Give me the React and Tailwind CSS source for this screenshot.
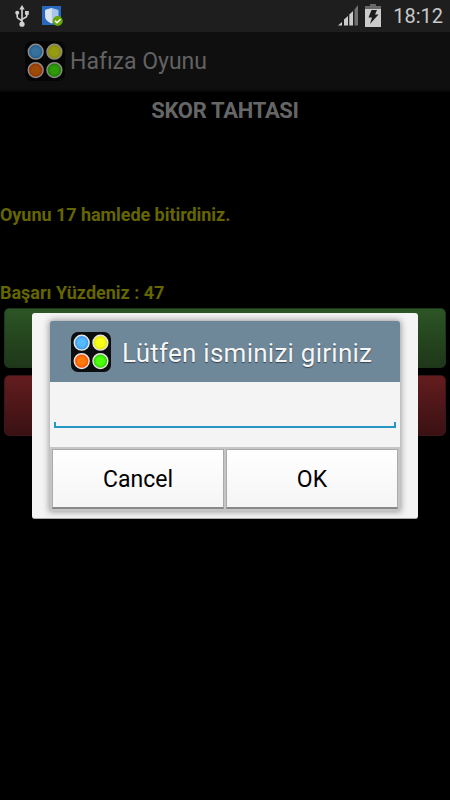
function GameIcon({ dim = false }) {
  const discs = [
    [10.7, 10.7, 'blue', '#55baff', '#318df0'],
    [29.4, 10.7, 'yellow', '#f7ff19', '#e4df00'],
    [10.7, 29.1, 'orange', '#ff7a0b', '#ff4200'],
    [29.4, 29.1, 'green', '#4bff0a', '#24bd00'],
  ];
  return (
    <svg viewBox="0 0 40 40" className="size-10 shrink-0">
      <rect width="40" height="40" rx="7" fill={dim ? '#050505' : '#0b0d0f'} />
      {discs.map(([cx, cy, name, inner, outer]) => (
        <g key={name} opacity={dim ? 0.6 : 1}>
          <radialGradient id={`disc-${name}-${dim}`}>
            <stop offset="0.5" stopColor={inner} />
            <stop offset="1" stopColor={outer} />
          </radialGradient>
          <circle cx={cx} cy={cy} r="7.4" fill={`url(#disc-${name}-${dim})`} stroke="#e4e4e0" strokeWidth="1.5" />
        </g>
      ))}
    </svg>
  );
}

function UsbIcon() {
  return (
    <svg viewBox="0 0 14 22" className="h-[22px] w-3.5" fill="none" stroke="#d2d2d2" strokeWidth="1.6">
      <path d="M7 3v16M2.2 8v4c0 2 4.8 2.5 4.8 4.5M11.8 8v3c0 2-4.8 2-4.8 4" />
      <path d="M7 0l2.7 4.5H4.3z" fill="#d2d2d2" stroke="none" />
      <circle cx="2.2" cy="7.8" r="2" fill="#d2d2d2" stroke="none" />
      <path d="M10 6h3.8v3.8H10z" fill="#d2d2d2" stroke="none" />
      <circle cx="7" cy="19.2" r="2.6" fill="#d2d2d2" stroke="none" />
    </svg>
  );
}

function ShieldIcon() {
  return (
    <svg viewBox="0 0 21 21" className="size-[21px]">
      <path d="M0 1h19v19H0z" fill="#2869bd" />
      <path d="M9.8 3l6.7 2v6c0 4-3.5 6-6.7 7.5C6.5 17 3.2 15 3.2 11V5z" fill="#a8c5ea" />
      <path d="M9.8 3v15.5C6.5 17 3.2 15 3.2 11V5z" fill="#dce5ef" />
      <circle cx="15.7" cy="16" r="5" fill="#67a607" />
      <path d="M13 15.8l2 2 3.5-3.6" fill="none" stroke="#fff" strokeWidth="1.4" />
    </svg>
  );
}

function SignalIcon() {
  return (
    <svg viewBox="0 0 21 21" className="h-[21px] w-[21px]">
      <path d="M0 20.5L4 17v3.5zM6 20.5v-6l4-3.5v9.5zM11.3 20.5V9.5L15 6v14.5z" fill="#cbcbcb" />
      <path d="M16.5 20.5v-16L20 0v20.5z" fill="#707070" />
    </svg>
  );
}

function BatteryIcon() {
  return (
    <svg viewBox="0 0 16 23" className="h-[23px] w-4">
      <path d="M5 0h6v2h5v4H0V2h5z" fill="#686868" />
      <path d="M0 5h16v18H0z" fill="#cbcbcb" />
      <path d="M6.5 6h5.5l-2 4.5h3.5L5 20l2-6.5H3.5z" fill="#1c1c1c" />
    </svg>
  );
}

function StatusBar() {
  return (
    <div className="flex h-8 items-start bg-[#1e1e1e] text-[#c9c9c9]">
      <div className="flex gap-[13px] pl-[15px] pt-[5px]">
        <UsbIcon />
        <ShieldIcon />
      </div>
      <div className="ml-auto flex items-start pr-[7px]">
        <div className="pt-[5px]"><SignalIcon /></div>
        <div className="ml-[6px] pt-[4px]"><BatteryIcon /></div>
        <span className="ml-[12px] w-[50px] whitespace-nowrap pt-[4px] text-right text-[20px] leading-6">18:12</span>
      </div>
    </div>
  );
}

function DialogButton({ children }) {
  return (
    <button className="h-[60px] border border-b-2 border-[#aaa] border-b-[#888] bg-linear-to-b from-white to-[#f5f5f5] pt-[3px] font-normal">
      {children}
    </button>
  );
}

function NameDialog() {
  return (
    <div className="absolute left-8 top-[313px] h-[206px] w-[386px] rounded-[3px] border-b border-[#aaa] bg-[#f4f4f4] px-[18px] pt-2">
      <div className="h-[190px] rounded-t-[3px] bg-[#c5c5c5] shadow-[0_0_6px_1px_#999]">
        <div className="flex h-[61px] items-center rounded-t-[3px] bg-[#6e8799] pl-[21px]">
          <GameIcon />
          <h2 className="ml-[11px] whitespace-nowrap pt-[3px] text-[26px] tracking-[0.25px] text-[#f6f6f6] [text-shadow:0_1px_1px_#354550]">Lütfen isminizi giriniz</h2>
        </div>
        <div className="h-[65px] bg-[#f4f4f4] px-1 pt-10">
          <div className="h-[6px] border-x-2 border-b-2 border-[#2597c5]" />
        </div>
        <div className="grid grid-cols-[172px_172px] gap-[2px] px-[2px] pt-[2px] text-[23px] text-black">
          <DialogButton>Cancel</DialogButton>
          <DialogButton>OK</DialogButton>
        </div>
      </div>
    </div>
  );
}

export default function App() {
  return (
    <main className="relative h-[800px] w-[450px] overflow-hidden bg-black font-[Roboto,sans-serif]">
      <StatusBar />
      <header className="flex h-[60px] items-center border-b-2 border-[#080808] bg-[#0f0f0f] pl-[25px]">
        <GameIcon dim />
        <h1 className="ml-[5px] pt-[3px] text-[23px] text-[#626262]">Hafıza Oyunu</h1>
      </header>
      <section className="font-bold">
        <h2 className="h-[111px] pt-[5px] text-center text-[22px] leading-7 tracking-[-0.3px] text-[#666]">SKOR TAHTASI</h2>
        <p className="h-[78px] text-[18px] leading-6 tracking-[-0.05px] text-[#666600]">Oyunu 17 hamlede bitirdiniz.</p>
        <p className="h-[27px] text-[18px] leading-6 text-[#666600]">Başarı Yüzdeniz : 47</p>
      </section>
      <div className="flex flex-col gap-[7px] px-1">
        <div className="h-[60px] rounded-[5px] border border-[#1c361c] bg-linear-to-b from-[#2c5525] to-[#1e3719]" />
        <div className="h-[61px] rounded-[5px] border border-[#3c1518] bg-linear-to-b from-[#631c1e] to-[#3a1113]" />
      </div>
      <NameDialog />
    </main>
  );
}
